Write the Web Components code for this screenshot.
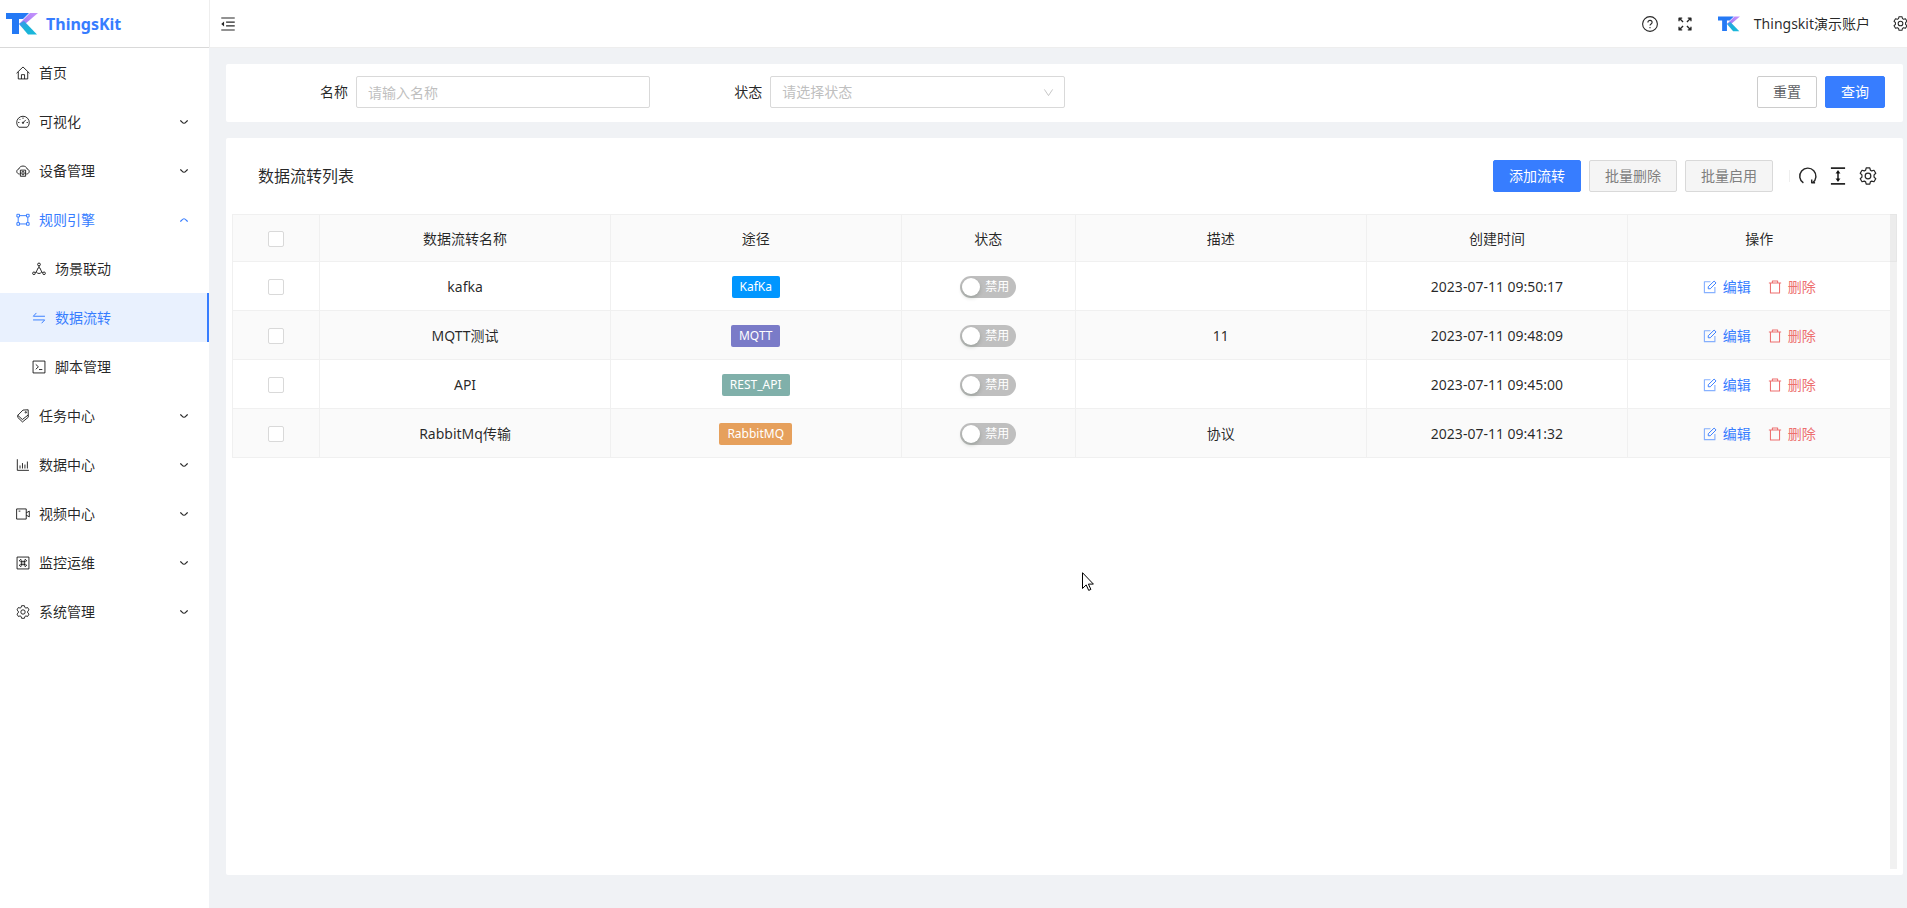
<!DOCTYPE html>
<html lang="zh-CN">
<head>
<meta charset="utf-8">
<title>ThingsKit</title>
<style>
html, body { margin: 0; height: 100%; overflow: hidden; }
body {
  font: 14px/22px "Noto Sans", "Noto Sans CJK SC", sans-serif;
  color: rgba(0, 0, 0, .85);
  --primary: #377dff;
  --line: #f0f0f0;
  --border: #d9d9d9;
}
</style>
</head>
<body>
<tk-app></tk-app>
<script>
const outline = (d) => `<svg viewBox="0 0 16 16" fill="none" stroke="currentColor" stroke-width="1.1" stroke-linejoin="round">${d}</svg>`;
const GEAR = 'M6.4.8h3.200l.5 2 1.200.700 2-.6 1.600 2.700-1.500 1.400v2l1.500 1.400-1.600 2.700-2-.6-1.200.700-.5 2H6.400l-.5-2-1.200-.700-2 .6-1.600-2.700L2.600 9V7L1.100 5.600l1.600-2.700 2 .6 1.200-.700z';
const ICONS = {
  home: outline('<path d="M.6 8.300 8 1.100l7.400 7.200M2.600 6.800v8h10.800v-8M6.200 14.800V9.900h3.600v4.900"/>'),
  dashboard: outline('<path d="M3.200 14a7.200 7.200 0 1 1 9.600 0zM8 8.800l3.200-3.200M8 2.900v1.500M2.400 8.600h1.500M12.100 8.600h1.500M4.200 4.800l.9.900"/><circle cx="8" cy="8.900" r=".8"/>'),
  cloud: outline('<path d="M4.200 11.500C.2 11.300-.2 6.600 3.200 5.700 4.600 1.200 11.400 1.200 12.800 5.700c3.400.9 3 5.600-1 5.800"/><path d="M5 7h6v7H5zM5 10.400h6M6.600 8.800h2.800M6.600 12.200h2.800"/>'),
  engine: outline('<path d="M1 1.500h3v3H1zM12 1.500h3v3h-3zM1 11h3v3H1zM12 11h3v3h-3zM4 3h8M4 12.500h8M2.500 4.500V11M13.500 4.500V11"/>'),
  scene: outline('<circle cx="8" cy="2.800" r="1.600"/><circle cx="2.200" cy="12.900" r="1.500"/><circle cx="13.800" cy="12.900" r="1.500"/><path d="M8 4.400v2.200M3.600 12.200l1.600-1M12.400 12.200l-1.600-1M7 6.700 4.900 11.300 6.500 13h3l1.600-1.700L9 6.700z"/>'),
  flow: outline('<path d="M14.800 6H1.500L5 2.200M1.200 10.200h13.300L11 14"/>'),
  script: outline('<path d="M1.200 1.200h13.600v13.600H1.200zM4.300 5l3 2.800-3 2.800M8 10.900h3.800"/>'),
  tags: outline('<path d="M8 1.200 13.900.900 14 6.800 7.300 12 2 7.200zM2 9.600l5.400 5.200L14 9.400M2 7.200v2.400M14 6.800v2.600"/><circle cx="11.200" cy="3.800" r=".8"/>'),
  chart: outline('<path d="M1.500 1.400v12.700h13.300M4.600 12V8.500M7.400 12V5.800M10.200 12V7.500M13 12V4"/>'),
  video: outline('<path d="M.7 2.200h11v11.600H.7zM11.700 6.700l3.500-2v6.600l-3.500-2M3 4.700h2"/>'),
  monitor: outline('<path d="M1.200 1.200h13.600v13.600H1.200z"/><path d="M6.500 6.500H5A1.200 1.200 0 1 1 6.500 5v6A1.200 1.200 0 1 1 5 9.500h6A1.200 1.200 0 1 1 9.500 11V5A1.200 1.200 0 1 1 11 6.500z"/>'),
  gear: outline(`<path d="${GEAR}"/><circle cx="8" cy="8" r="2.500"/>`),
  down: outline('<path d="M2 5.500C4.500 7 5.500 10 8 10s3.500-3 6-4.500" stroke-width="1.900"/>'),
  up: outline('<path d="M2 10.500C4.500 9 5.500 6 8 6s3.500 3 6 4.500" stroke-width="1.900"/>'),
  fold: outline('<path d="M.3 1.200h15.400M5.800 5.800h9.900M5.800 10.200h9.900M.3 14.800h15.400" stroke-width="1.300"/><path d="M3.500 5.200v5.600L.3 8z" fill="currentColor" stroke="none"/>'),
  help: outline('<circle cx="8" cy="8" r="7.400"/><path d="M5.900 6.400c0-2.700 4.200-2.700 4.200 0C10.100 8 8 7.900 8 9.600M8 11v1.300"/>'),
  full: outline('<path d="M1.200 4.800V1.200h3.600M11.200 1.200h3.600v3.600M14.800 11.200v3.600h-3.600M4.800 14.800H1.200v-3.600M1.200 1.200l4.600 4.600M14.800 1.200l-4.600 4.600M14.800 14.800l-4.600-4.600M1.200 14.800l4.600-4.600" stroke-width="1.500"/>'),
  redo: outline('<path d="M3.900 14.200A7.200 7.200 0 1 1 12.100 14M14.300 14h-3v-3" stroke-width="1.300"/>'),
  height: outline('<path d="M1.700 1h12.600M1.700 15h12.600M8 4v8" stroke-width="1.400"/><path d="M8 2.600 10.200 5.700H5.800zM8 13.400l2.200-3.100H5.800z" fill="currentColor" stroke="none"/>'),
  edit: outline('<path d="M8.500 2H1.600v12.500h12V8" opacity=".6" stroke-width="1.300"/><path d="M6 10V7.700l6.700-6.500 2.200 2.200L8.300 10z"/>'),
  trash: outline('<path d="M1 3.500h14M5 3.500V1.200h6v2.300M2.800 3.500v11.300h10.400V3.500" stroke-width="1.200"/>'),
  select: outline('<path d="m2 3.500 6 9 6-9" stroke-width="1.300"/>')
};

class TkElement extends HTMLElement {
  constructor() { super(); this.attachShadow({ mode: 'open' }); }
  connectedCallback() { this.shadowRoot.innerHTML = this.render(); }
}

customElements.define('tk-icon', class extends TkElement {
  render() {
    return `<style>:host{display:inline-block;width:14px;height:14px;flex:none}
      svg{display:block;width:100%;height:100%;overflow:visible}</style>${ICONS[this.getAttribute('name')]}`;
  }
});

customElements.define('tk-logo', class extends TkElement {
  render() {
    return `<style>:host{display:block;width:32px;height:22px;flex:none}svg{display:block;width:100%;height:100%}</style>
    <svg viewBox="0 0 32 22">
      <defs>
        <linearGradient id="p" x1="0" y1="1" x2="1" y2="0"><stop offset="0" stop-color="#9a78f5"/><stop offset="1" stop-color="#c893fb"/></linearGradient>
        <linearGradient id="c" x1="0" y1="0" x2="1" y2="1"><stop offset="0" stop-color="#3f95ee"/><stop offset=".5" stop-color="#1bb2d8"/><stop offset="1" stop-color="#19b9dc"/></linearGradient>
      </defs>
      <path d="M0 0h23l-6 6h-4v15H6V6H0z" fill="#2479f5"/>
      <path d="M24 0h8L19 11h-6z" fill="url(#p)"/>
      <path d="M13 11l5-3 13 13.500H22z" fill="url(#c)"/>
    </svg>`;
  }
});

customElements.define('tk-menu-item', class extends TkElement {
  render() {
    const arrow = this.getAttribute('arrow');
    return `<style>
      :host{display:block}
      a{display:flex;align-items:center;box-sizing:border-box;height:49px;padding:0 20px 0 16px;color:inherit;text-decoration:none}
      .text{flex:1;margin-left:9px}
      .arrow{width:10px;height:10px}
      :host([sub]) a{padding-left:32px}
      :host([open]) a{color:var(--primary)}
      :host([active]) a{color:var(--primary);background:#e9f1fe;border-right:2px solid var(--primary)}
    </style>
    <a href="#"><tk-icon name="${this.getAttribute('icon')}"></tk-icon><span class="text"><slot></slot></span>
    ${arrow ? `<tk-icon class="arrow" name="${arrow}"></tk-icon>` : ''}</a>`;
  }
});

customElements.define('tk-sidebar', class extends TkElement {
  render() {
    return `<style>
      :host{display:block;width:209px;flex:none;background:#fff}
      .brand{display:flex;align-items:center;gap:8px;box-sizing:border-box;height:48px;padding-left:6px;border-bottom:1px solid var(--border);
        font-size:16px;font-weight:700;color:var(--primary);text-decoration:none}
    </style>
    <a class="brand" href="#"><tk-logo></tk-logo><span>ThingsKit</span></a>
    <nav>
      <tk-menu-item icon="home">首页</tk-menu-item>
      <tk-menu-item icon="dashboard" arrow="down">可视化</tk-menu-item>
      <tk-menu-item icon="cloud" arrow="down">设备管理</tk-menu-item>
      <tk-menu-item icon="engine" arrow="up" open>规则引擎</tk-menu-item>
      <tk-menu-item icon="scene" sub>场景联动</tk-menu-item>
      <tk-menu-item icon="flow" sub active>数据流转</tk-menu-item>
      <tk-menu-item icon="script" sub>脚本管理</tk-menu-item>
      <tk-menu-item icon="tags" arrow="down">任务中心</tk-menu-item>
      <tk-menu-item icon="chart" arrow="down">数据中心</tk-menu-item>
      <tk-menu-item icon="video" arrow="down">视频中心</tk-menu-item>
      <tk-menu-item icon="monitor" arrow="down">监控运维</tk-menu-item>
      <tk-menu-item icon="gear" arrow="down">系统管理</tk-menu-item>
    </nav>`;
  }
});

customElements.define('tk-header', class extends TkElement {
  render() {
    return `<style>
      :host{display:flex;align-items:center;box-sizing:border-box;height:48px;padding-left:11px;background:#fff;
        border-left:1px solid #eee;border-bottom:1px solid #eee;overflow:hidden}
      button{display:flex;padding:0;border:0;background:none;color:inherit;font:inherit}
      .fold{margin-right:auto}
      .help tk-icon{width:16px;height:16px}
      .help{margin-right:20px}
      .full{margin-right:26px}
      .user{align-items:center;gap:14px;margin-right:23px}
      tk-logo{width:22px;height:16px}
      .settings{margin-right:-1px}
      .settings tk-icon{width:15px;height:15px}
    </style>
    <button class="fold" aria-label="收起菜单"><tk-icon name="fold"></tk-icon></button>
    <button class="help" aria-label="帮助"><tk-icon name="help"></tk-icon></button>
    <button class="full" aria-label="全屏"><tk-icon name="full"></tk-icon></button>
    <button class="user"><tk-logo></tk-logo><span>Thingskit演示账户</span></button>
    <button class="settings" aria-label="设置"><tk-icon name="gear"></tk-icon></button>`;
  }
});

customElements.define('tk-button', class extends TkElement {
  render() {
    return `<style>
      :host{display:block}
      button{display:block;box-sizing:border-box;height:32px;padding:0 15px;border:1px solid #ccc;border-radius:2px;background:#fff;
        color:#606266;font:inherit;line-height:30px;white-space:nowrap}
      :host([primary]) button{background:var(--primary);border-color:var(--primary);color:#fff}
      button:disabled{background:#f5f5f5;border-color:var(--border);color:#808080}
    </style><button ${this.hasAttribute('disabled') ? 'disabled' : ''}><slot></slot></button>`;
  }
});

customElements.define('tk-search', class extends TkElement {
  render() {
    return `<style>
      :host{display:block;background:#fff;border-radius:2px}
      form{display:flex;padding:12px 10px 14px}
      .field{display:flex;align-items:center;width:25%;box-sizing:border-box;padding-left:84px}
      label{flex:none;margin-right:8px}
      .box{display:flex;position:relative;flex:1}
      input,select{box-sizing:border-box;width:100%;height:32px;padding:0 11px;border:1px solid var(--border);border-radius:2px;
        background:#fff;font:inherit;color:#bfbfbf;appearance:none;outline:0}
      input::placeholder{color:#bfbfbf}
      .box tk-icon{position:absolute;right:11px;top:11px;width:11px;height:11px;color:#bfbfbf;pointer-events:none}
      .actions{display:flex;gap:8px;margin:0 8px 0 auto}
    </style>
    <form>
      <div class="field"><label for="name">名称</label><div class="box"><input id="name" placeholder="请输入名称"></div></div>
      <div class="field"><label for="state">状态</label><div class="box"><select id="state"><option>请选择状态</option></select><tk-icon name="select"></tk-icon></div></div>
      <div class="actions"><tk-button>重置</tk-button><tk-button primary>查询</tk-button></div>
    </form>`;
  }
});

customElements.define('tk-tag', class extends TkElement {
  render() {
    return `<style>:host{display:inline-block;vertical-align:top;padding:0 8px;border-radius:2px;color:#fff;font-size:12px;line-height:22px;background:${this.getAttribute('color')}}</style><slot></slot>`;
  }
});

customElements.define('tk-switch', class extends TkElement {
  render() {
    return `<style>
      :host{display:inline-block;vertical-align:top}
      button{display:flex;align-items:center;box-sizing:border-box;width:56px;height:22px;padding:0 7px 0 2px;border:0;border-radius:11px;
        background:#bfbfbf;color:#fff;font:inherit;font-size:12px;justify-content:space-between}
      i{width:18px;height:18px;border-radius:9px;background:#fff;box-shadow:0 2px 4px rgba(0,35,11,.2)}
    </style><button role="switch" aria-checked="false"><i></i><span><slot></slot></span></button>`;
  }
});

customElements.define('tk-action', class extends TkElement {
  render() {
    return `<style>
      :host{display:block}
      a{display:flex;align-items:center;gap:6px;color:inherit;text-decoration:none}
    </style><a href="#"><tk-icon name="${this.getAttribute('icon')}"></tk-icon><span><slot></slot></span></a>`;
  }
});

const ROWS = [
  ['kafka', 'KafKa', '#0096ff', '', '2023-07-11 09:50:17'],
  ['MQTT测试', 'MQTT', '#7a7bc8', '11', '2023-07-11 09:48:09'],
  ['API', 'REST_API', '#80b0aa', '', '2023-07-11 09:45:00'],
  ['RabbitMq传输', 'RabbitMQ', '#e6a05c', '协议', '2023-07-11 09:41:32']
];

customElements.define('tk-table', class extends TkElement {
  render() {
    const rows = ROWS.map(([name, tag, color, note, time]) => `<tr>
      <td><input type="checkbox" aria-label="选择 ${name}"></td><td>${name}</td>
      <td><tk-tag color="${color}">${tag}</tk-tag></td><td><tk-switch>禁用</tk-switch></td>
      <td>${note}</td><td>${time}</td>
      <td><div class="ops"><tk-action icon="edit">编辑</tk-action><tk-action class="del" icon="trash">删除</tk-action></div></td></tr>`).join('');
    return `<style>
      :host{display:flex;align-items:stretch}
      .main{flex:1}
      table{width:100%;table-layout:fixed;border-collapse:separate;border-spacing:0;border-left:1px solid var(--line)}
      th,td{box-sizing:border-box;height:49px;padding:2px 0 0;text-align:center;font-weight:400;border-right:1px solid var(--line);border-bottom:1px solid var(--line)}
      th{height:48px;background:#fafafa;border-top:1px solid var(--line)}
      tr:nth-child(even) td{background:#fafafa}
      th:last-child,td:last-child{border-right:0}
      input{display:block;box-sizing:border-box;width:16px;height:16px;margin:0 auto;border:1px solid var(--border);border-radius:2px;background:#fff;appearance:none}
      .ops{display:flex;justify-content:center;gap:17px;color:var(--primary)}
      .del{color:#ed6f6f}
      .bar{display:flex;flex-direction:column;width:7px;flex:none;background:#f1f1f1}
      .bar i{box-sizing:border-box;height:48px;background:#ececec;border:1px solid #e6e6e6;border-left:0}
    </style>
    <div class="main"><table>
      <colgroup><col style="width:60px"><col style="width:200px"><col style="width:200px"><col style="width:120px"><col style="width:200px"><col style="width:180px"><col style="width:180px"></colgroup>
      <thead><tr><th><input type="checkbox" aria-label="全选"></th><th>数据流转名称</th><th>途径</th><th>状态</th><th>描述</th><th>创建时间</th><th>操作</th></tr></thead>
      <tbody>${rows}</tbody>
    </table></div>
    <div class="bar"><i></i></div>`;
  }
});

customElements.define('tk-list-card', class extends TkElement {
  render() {
    return `<style>
      :host{display:flex;flex-direction:column;box-sizing:border-box;padding:6px;background:#fff;border-radius:2px}
      .head{display:flex;align-items:center;gap:8px;height:64px;padding:0 20px 6px 26px}
      h1{margin:0 auto 0 0;font-size:16px;font-weight:400;line-height:24px}
      .tools{display:flex;align-items:center;gap:12px;margin-left:8px}
      .sep{width:1px;height:12px;background:#eee;margin-right:-3px}
      .tools button{display:flex;padding:0;border:0;background:none;color:inherit}
      .tools tk-icon{width:18px;height:18px}
      tk-table{flex:1}
    </style>
    <div class="head"><h1>数据流转列表</h1>
      <tk-button primary>添加流转</tk-button><tk-button disabled>批量删除</tk-button><tk-button disabled>批量启用</tk-button>
      <div class="tools"><span class="sep"></span>
        <button aria-label="刷新"><tk-icon name="redo"></tk-icon></button>
        <button aria-label="密度"><tk-icon name="height"></tk-icon></button>
        <button aria-label="列设置"><tk-icon name="gear"></tk-icon></button></div>
    </div>
    <tk-table></tk-table>`;
  }
});

customElements.define('tk-cursor', class extends TkElement {
  render() {
    return `<style>:host{display:block;position:absolute;left:1082px;top:572px;width:12px;height:19px;pointer-events:none}svg{display:block}</style>
    <svg width="12" height="19" viewBox="0 0 12 19"><path d="M.5.700v15.800l3.700-3.600 2.500 5.500 2.200-1-2.500-5.300h5z" fill="#fff" stroke="#000"/></svg>`;
  }
});

customElements.define('tk-app', class extends TkElement {
  render() {
    return `<style>
      :host{display:flex;height:100vh;position:relative;background:#f0f2f5}
      .page{display:flex;flex-direction:column;flex:1;min-width:0}
      main{display:flex;flex-direction:column;flex:1;gap:16px;padding:16px 4px 33px 17px}
      tk-list-card{flex:1}
    </style>
    <tk-sidebar></tk-sidebar>
    <div class="page"><tk-header></tk-header><main><tk-search></tk-search><tk-list-card></tk-list-card></main></div>
    <tk-cursor></tk-cursor>`;
  }
});
</script>
</body>
</html>
